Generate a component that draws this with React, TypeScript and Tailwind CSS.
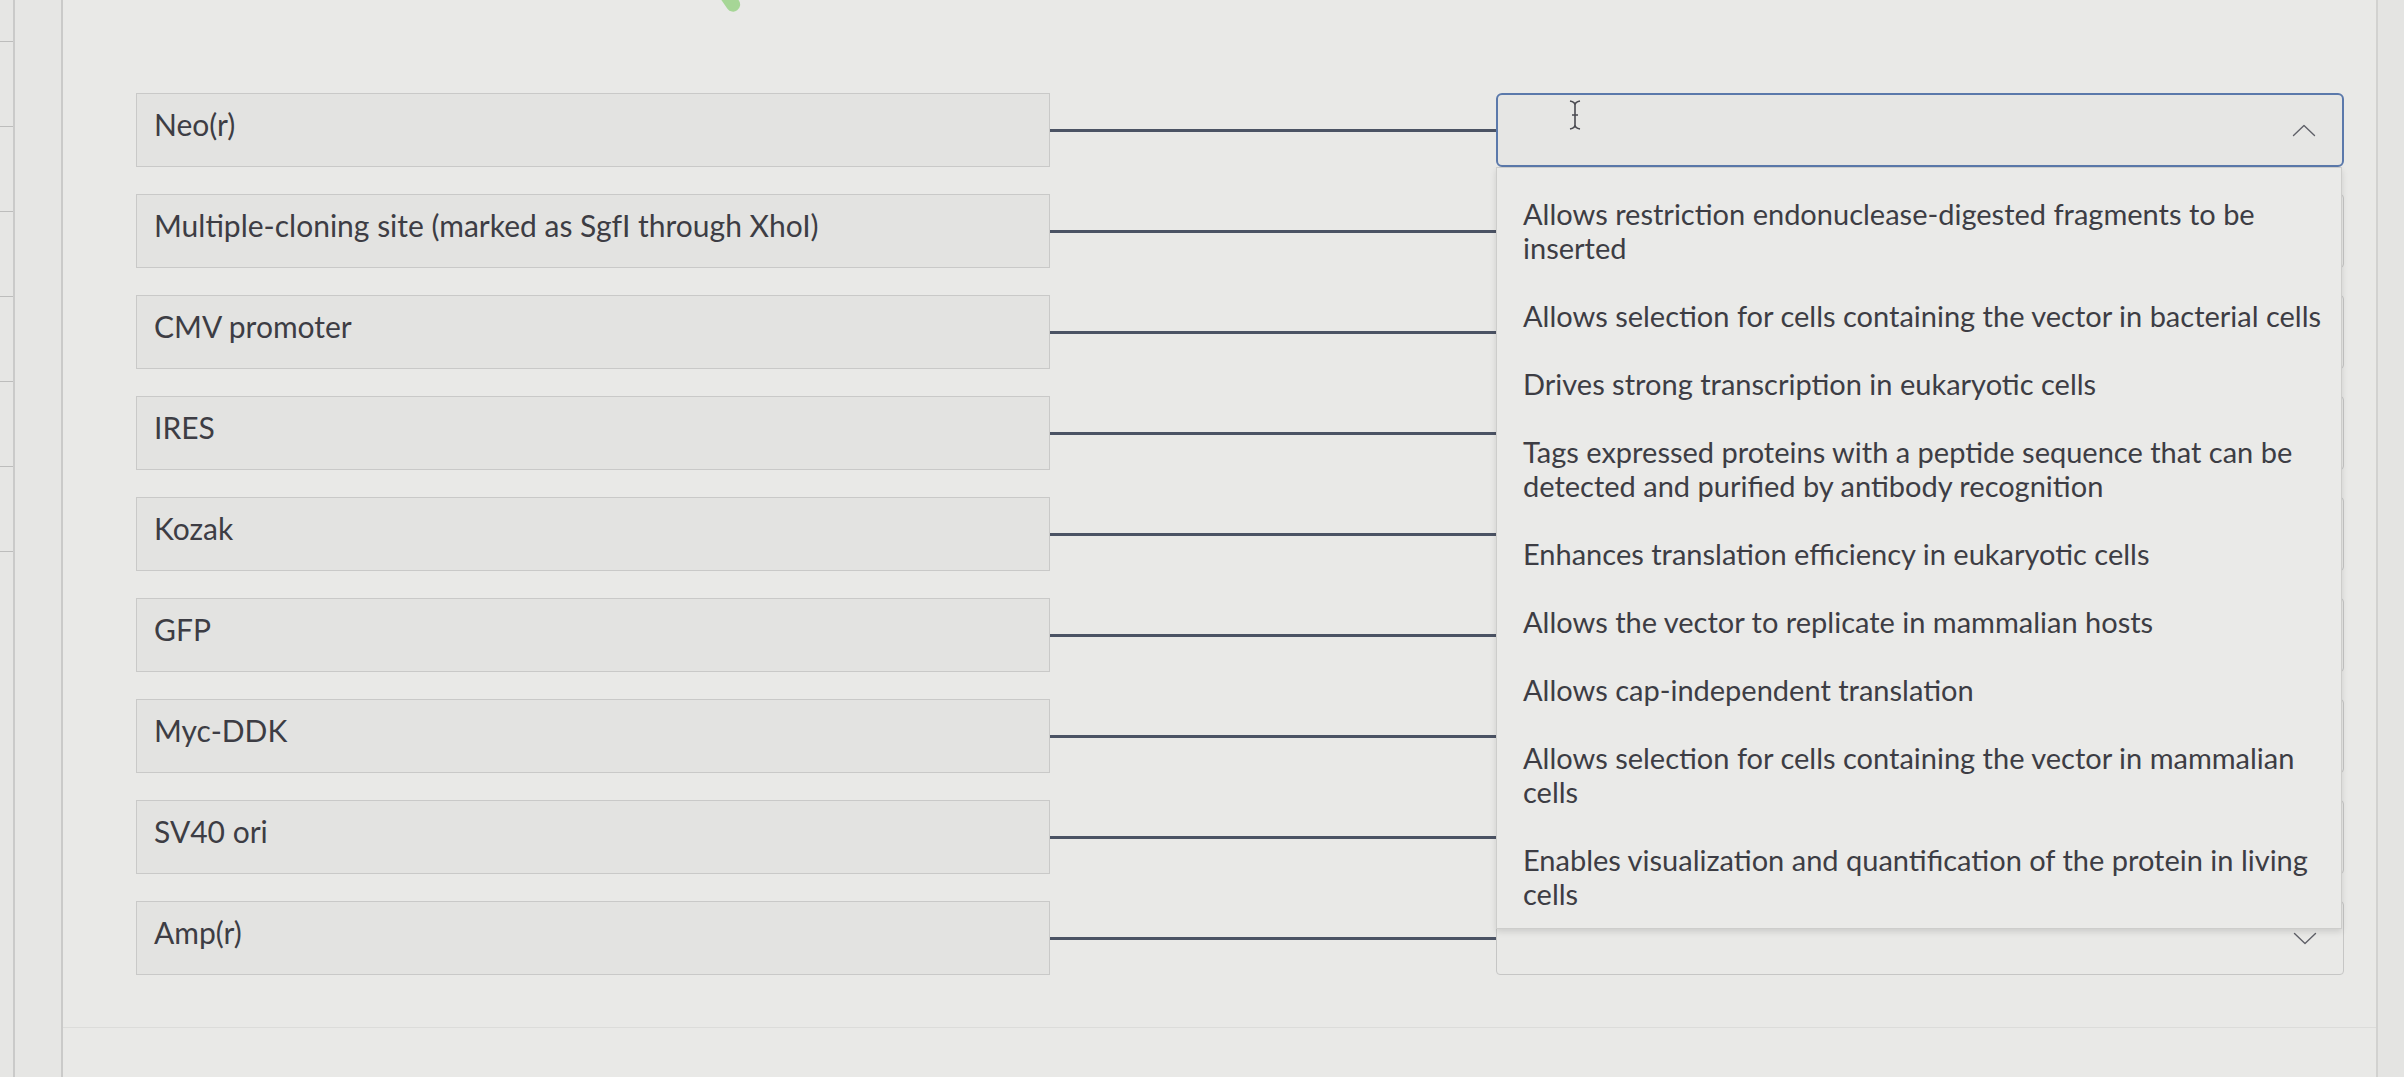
const features = [
  "Neo(r)",
  "Multiple-cloning site (marked as SgfI through XhoI)",
  "CMV promoter",
  "IRES",
  "Kozak",
  "GFP",
  "Myc-DDK",
  "SV40 ori",
  "Amp(r)",
];

const options = [
  "Allows restriction endonuclease-digested fragments to be inserted",
  "Allows selection for cells containing the vector in bacterial cells",
  "Drives strong transcription in eukaryotic cells",
  "Tags expressed proteins with a peptide sequence that can be detected and purified by antibody recognition",
  "Enhances translation efficiency in eukaryotic cells",
  "Allows the vector to replicate in mammalian hosts",
  "Allows cap-independent translation",
  "Allows selection for cells containing the vector in mammalian cells",
  "Enables visualization and quantification of the protein in living cells",
];

function Chevron({ up }: { up?: boolean }) {
  return (
    <svg width="24" height="13" viewBox="0 0 24 13" fill="none" stroke="#5f6068" strokeWidth={1.4} strokeLinecap="round" strokeLinejoin="round">
      <path d={up ? "M1.5 11.5 L12 1.5 L22.5 11.5" : "M1.5 1.5 L12 11.5 L22.5 1.5"} />
    </svg>
  );
}

function Dropdown() {
  return (
    <div className="absolute left-0 right-[2px] top-full z-10 border border-[#cdcdcb] bg-[#eaeae8] pt-[12px] shadow-[0_3px_6px_rgba(0,0,0,0.12)]">
      {options.map((opt) => (
        <div key={opt} className="py-[17px] pl-[26px] pr-[6px] text-[29px] leading-[34px]">
          {opt}
        </div>
      ))}
    </div>
  );
}

export default function App() {
  return (
    <div className="relative flex h-[1077px] w-full overflow-hidden bg-[#e9e9e7] font-['Lato',sans-serif] text-[#3d3d44]">
      {/* side rail */}
      <aside className="flex w-[63px] shrink-0 border-r-2 border-[#cacac9] bg-[#e6e6e4]">
        <div className="flex w-[15px] flex-col gap-[84px] border-r-2 border-[#cacac9] pt-[41px]">
          {[0, 1, 2, 3, 4, 5, 6].map((i) => (
            <div key={i} className="h-px w-full bg-[#bdbdbc]" />
          ))}
        </div>
      </aside>

      <main className="relative flex-1 border-r-2 border-[#d2d2d0]">
        {/* green leaf peeking at the top */}
        <div className="absolute left-[662px] top-[-6px] h-[18px] w-[14px] rotate-[-35deg] rounded-b-full bg-[#a6d696]" />

        <div className="flex flex-col gap-[27px] pl-[73px] pr-[32px] pt-[93px]">
          {features.map((name, i) => (
            <div key={name} className="flex h-[74px] items-center">
              <div className="h-full w-[914px] shrink-0 border border-[#c9c9c8] bg-[#e3e3e1] px-[17px] pt-[12px] text-[30px] leading-[36px]">
                {name}
              </div>
              <div className="h-[3px] flex-1 bg-[#4b5364]" />
              {i === 0 ? (
                <div className="relative h-full w-[848px] shrink-0">
                  <div className="flex h-full items-center justify-end rounded-[6px] border-2 border-[#5b79ab] bg-[#e6e6e4] pr-[26px]">
                    <Chevron up />
                  </div>
                  {/* text cursor */}
                  <svg className="absolute left-[72px] top-[7px]" width="14" height="30" viewBox="0 0 14 30" fill="none" stroke="#4a4a50" strokeWidth={1.6}>
                    <path d="M2 1 Q7 2 7 5 Q7 2 12 1 M7 5 V25 Q7 28 2 29 M7 25 Q7 28 12 29 M4 15 H10" />
                  </svg>
                  <Dropdown />
                </div>
              ) : (
                <div className="flex h-full w-[848px] shrink-0 items-center justify-end rounded-[4px] border border-[#c6c6c5] bg-[#e9e9e7] pr-[26px]">
                  <Chevron />
                </div>
              )}
            </div>
          ))}
        </div>

        <div className="mt-[52px] border-t border-[#dcdcda]" />
      </main>

      <div className="w-[26px] shrink-0 bg-[#e4e4e2]" />
    </div>
  );
}
